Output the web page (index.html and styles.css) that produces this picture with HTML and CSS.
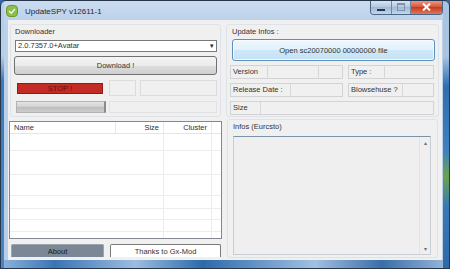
FILE: index.html
```html
<!DOCTYPE html>
<html lang="en">
<head>
    <meta charset="UTF-8">
    <title>UpdateSPY v12611-1</title>
    <link rel="stylesheet" href="styles.css">
</head>
<body>

<div class="window">
    <div class="titlebar">
        <span class="app-icon">
            <svg width="12" height="12" viewBox="0 0 12 12">
                <rect x="0.5" y="0.5" width="11" height="11" rx="3.5" fill="#8cbf4a" stroke="#6a9a34"/>
                <path d="M3 6 L5.2 8.2 L9 4" fill="none" stroke="#f4f9ec" stroke-width="1.4"/>
            </svg>
        </span>
        <span class="title">UpdateSPY v12611-1</span>
        <div class="caption-buttons">
            <span class="cap min"><i></i></span>
            <span class="cap max"><i></i></span>
            <span class="cap close">
                <svg width="9" height="8" viewBox="0 0 9 8">
                    <path d="M1 0.5 L8 7.5 M8 0.5 L1 7.5" stroke="#fff" stroke-width="2"/>
                </svg>
            </span>
        </div>
    </div>

    <div class="client">
        <div class="col-left">
            <div class="group downloader">
                <div class="group-label">Downloader</div>
                <div class="combo">
                    <span>2.0.7357.0+Avatar</span>
                    <span class="combo-arrow">&#9662;</span>
                </div>
                <div class="btn download">Download !</div>
                <div class="row stop-row">
                    <div class="stop-cell"><div class="stop">STOP !</div></div>
                    <div class="cell small"></div>
                    <div class="cell wide"></div>
                </div>
                <div class="row prog-row">
                    <div class="progress"></div>
                    <div class="cell wide"></div>
                </div>
            </div>

            <div class="list">
                <div class="list-head">
                    <span class="col-name">Name</span>
                    <span class="col-size">Size</span>
                    <span class="col-cluster">Cluster</span>
                    <span class="col-rest"></span>
                </div>
                <div class="list-row h17"></div>
                <div class="list-row h24"></div>
                <div class="list-row h21"></div>
                <div class="list-row h13"></div>
                <div class="list-row h11"></div>
                <div class="list-row h12"></div>
                <div class="list-row last"></div>
            </div>

            <div class="tabs">
                <div class="tab about">About</div>
                <div class="tab thanks">Thanks to Gx-Mod</div>
            </div>
        </div>

        <div class="col-right">
            <div class="group update">
                <div class="group-label">Update Infos :</div>
                <div class="btn open-file">Open sc20070000 00000000 file</div>
                <div class="field-row">
                    <div class="field version">
                        <span class="seg label-seg">Version</span>
                        <span class="seg mid-seg"></span>
                        <span class="seg"></span>
                    </div>
                    <div class="field type">
                        <span class="seg label-seg">Type :</span>
                        <span class="seg"></span>
                    </div>
                </div>
                <div class="field-row">
                    <div class="field release">
                        <span class="seg label-seg">Release Date :</span>
                        <span class="seg"></span>
                    </div>
                    <div class="field blow">
                        <span class="seg label-seg">Blowsehuse ?</span>
                        <span class="seg"></span>
                    </div>
                </div>
                <div class="field-row">
                    <div class="field size">
                        <span class="seg label-seg">Size</span>
                        <span class="seg"></span>
                    </div>
                </div>
            </div>

            <div class="group infos">
                <div class="group-label">Infos (Eurcsto)</div>
                <div class="textarea">
                    <div class="scroll">
                        <span class="arr up">&#9652;</span>
                        <span class="arr down">&#9662;</span>
                    </div>
                </div>
            </div>
        </div>
    </div>
</div>

</body>
</html>
```

FILE: styles.css
```css
html, body {
    margin: 0;
    padding: 0;
    background: #2f6aa8;
}

body {
    font-family: "Liberation Sans", Arial, sans-serif;
    font-size: 7.5px;
    color: #333;
}

.window {
    width: 450px;
    height: 269px;
    box-sizing: border-box;
    display: flex;
    flex-direction: column;
    border: 1px solid #27374b;
    border-radius: 6px 6px 0 0;
    background:
        linear-gradient(to bottom, #a9c4e2 0, #a9c4e2 55px, #2f6fb0 85px, #3f80c0 150px, #6aa34c 175px, #3b78b6 205px, #2f6aa8 100%) right top / 6px 100% no-repeat,
        linear-gradient(to bottom, #b8cde6 0, #b8cde6 55px, #3b79b8 80px, #4a86c2 100%) left top / 3px 100% no-repeat,
        linear-gradient(to right, #8fb4dc 0, #3a74b5 12%, #9dbde0 30%, #2d6aaa 45%, #a2c0e2 70%, #3a6ea8 85%, #9cb9dc 100%) left bottom / 100% 8px no-repeat,
        linear-gradient(to bottom, #cbdbef 0, #bcd1ea 20px, #b9cfe8 100%);
    overflow: hidden;
}

/* barre de titre */
.titlebar {
    height: 18px;
    display: flex;
    align-items: center;
    padding-left: 5px;
    position: relative;
}

.app-icon {
    display: flex;
    width: 12px;
    height: 12px;
    margin-top: 2px;
}

.title {
    margin-left: 7px;
    margin-top: 2px;
    font-size: 8px;
    color: #1b2733;
}

.caption-buttons {
    position: absolute;
    top: -1px;
    right: 6px;
    display: flex;
    height: 14px;
    border: 1px solid #4b6585;
    border-top: none;
    border-radius: 0 0 4px 4px;
    overflow: hidden;
}

.cap {
    display: flex;
    align-items: center;
    justify-content: center;
    height: 100%;
    background: linear-gradient(#dfe9f5, #b4c8e0 50%, #9fb7d4 51%, #c3d6ec);
}

.cap.min {
    width: 20px;
    border-right: 1px solid #6f88a8;
}

.cap.min i {
    width: 8px;
    height: 2px;
    margin-top: 5px;
    background: #25384f;
}

.cap.max {
    width: 18px;
    border-right: 1px solid #6f88a8;
}

.cap.max i {
    width: 6px;
    height: 5px;
    border: 1px solid #7d93ad;
    border-top-width: 2px;
}

.cap.close {
    width: 31px;
    background: linear-gradient(#eaa58f, #d9533a 50%, #c43b1d 51%, #e0755a);
}

/* zone client */
.client {
    flex: 1;
    margin: 1px 7px 8px 7px;
    padding: 4px 3px 0 1px;
    background: #f0f0f0;
    display: flex;
    gap: 4px;
}

.col-left {
    width: 213px;
    display: flex;
    flex-direction: column;
}

.col-right {
    width: 213px;
    display: flex;
    flex-direction: column;
}

.group {
    box-sizing: border-box;
    border: 1px solid #dde3e8;
    border-radius: 3px;
}

.group-label {
    height: 12px;
    line-height: 11px;
    white-space: nowrap;
}

.downloader {
    margin-left: 1px;
    width: 211px;
    height: 93px;
    padding: 1px 3px 0 4px;
}

.combo {
    margin-top: 2px;
    height: 12px;
    box-sizing: border-box;
    border: 1px solid #7a7a7a;
    background: #fff;
    display: flex;
    align-items: center;
    justify-content: space-between;
    padding: 0 2px 0 2px;
    line-height: 10px;
}

.combo-arrow {
    font-size: 7px;
    color: #222;
}

.btn {
    box-sizing: border-box;
    border: 1px solid #707070;
    border-radius: 3px;
    display: flex;
    align-items: center;
    justify-content: center;
    white-space: nowrap;
}

.download {
    margin: 4px 0 0 -1px;
    height: 19px;
    background: linear-gradient(#f4f4f4, #ebebeb 50%, #dddddd 51%, #cfcfcf);
}

.row {
    display: flex;
}

.stop-row {
    margin-top: 5px;
    height: 16px;
}

.stop-cell {
    width: 91px;
    box-sizing: border-box;
    padding: 3px 3px 2px 2px;
}

.stop {
    height: 100%;
    background: #c42b24;
    border: 1px solid #8d1c17;
    box-sizing: border-box;
    display: flex;
    align-items: center;
    justify-content: center;
    color: #6a100c;
}

.cell {
    box-sizing: border-box;
    border: 1px solid #dcdcdc;
    height: 100%;
}

.cell.small {
    width: 27px;
    margin-left: 3px;
}

.cell.wide {
    flex: 1;
    margin-left: 4px;
}

.prog-row {
    margin-top: 5px;
    height: 12px;
}

.progress {
    width: 90px;
    margin-left: 1px;
    box-sizing: border-box;
    border: 1px solid #b2b2b2;
    border-right: 2px solid #8a8a8a;
    background: linear-gradient(#e4e4e4, #d0d0d0 50%, #bdbdbd 51%, #cdcdcd);
}

.prog-row .cell.wide {
    margin-left: 3px;
    border-color: #e2e2e2;
}

/* liste des fichiers */
.list {
    margin-top: 4px;
    height: 118px;
    box-sizing: border-box;
    border: 1px solid #828790;
    background: #fff;
    overflow: hidden;
    background-image:
        linear-gradient(#ececec, #ececec),
        linear-gradient(#ececec, #ececec);
    background-size: 1px 100%, 1px 100%;
    background-position: 153px 0, 201px 0;
    background-repeat: no-repeat;
}

.list-head {
    display: flex;
    height: 11px;
    line-height: 11px;
    background: #fff;
    border-bottom: 1px solid #e5e5e5;
}

.list-head span {
    box-sizing: border-box;
    border-right: 1px solid #e3e8ee;
    padding: 0 4px;
}

.col-name {
    width: 106px;
}

.col-size {
    width: 48px;
    text-align: right;
}

.col-cluster {
    width: 48px;
    text-align: right;
}

.col-rest {
    flex: 1;
    border-right: none !important;
}

.list-row {
    border-bottom: 1px solid #ededed;
    box-sizing: border-box;
}

.h17 { height: 17px; }
.h24 { height: 24px; }
.h21 { height: 21px; }
.h13 { height: 13px; }
.h11 { height: 11px; }
.h12 { height: 12px; }
.list-row.last { border-bottom: none; height: 9px; }

/* onglets du bas */
.tabs {
    margin-top: 5px;
    display: flex;
    height: 13px;
}

.tab {
    box-sizing: border-box;
    border: 1px solid #8a8a8a;
    border-bottom: none;
    border-radius: 2px 2px 0 0;
    display: flex;
    align-items: center;
    justify-content: center;
}

.about {
    width: 93px;
    margin-left: 2px;
    background: #7b8794;
    border-color: #9aa4ae;
    color: #1a1a1a;
}

.thanks {
    width: 111px;
    margin-left: 6px;
    background: #fff;
    border-color: #7a7a7a;
}

/* colonne droite */
.update {
    height: 93px;
    padding: 1px 3px 0 5px;
}

.open-file {
    margin-top: 1px;
    height: 22px;
    border-color: #5f8fbb;
    background: linear-gradient(#eef7fd, #e1f1fb 50%, #cde8f8 51%, #c4e2f5);
    box-shadow: inset 0 0 0 1px #f6fbff;
}

.field-row {
    display: flex;
    gap: 5px;
    margin-top: 4px;
    margin-left: -2px;
}

.field {
    display: flex;
    height: 14px;
    box-sizing: border-box;
    border: 1px solid #d3d3d3;
}

.seg {
    box-sizing: border-box;
    height: 100%;
    line-height: 12px;
    padding-left: 2px;
    white-space: nowrap;
    border-right: 1px solid #d8d8d8;
}

.seg:last-child {
    border-right: none;
    flex: 1;
}

.version { width: 113px; }
.version .label-seg { width: 37px; }
.version .mid-seg { width: 51px; }
.type { width: 86px; }
.type .label-seg { width: 36px; }
.release { width: 113px; }
.release .label-seg { width: 60px; }
.blow { width: 86px; }
.blow .label-seg { width: 54px; }
.size { width: 204px; }
.size .label-seg { width: 30px; }

.infos {
    margin-top: 2px;
    margin-left: 1px;
    width: 211px;
    height: 139px;
    padding: 1px 6px 0 5px;
}

.textarea {
    margin-top: 3px;
    height: 119px;
    box-sizing: border-box;
    border: 1px solid #c9ced4;
    border-top-color: #7d93a6;
    background: #efefef;
    display: flex;
    justify-content: flex-end;
}

.scroll {
    width: 10px;
    border-left: 1px solid #e2e2e2;
    display: flex;
    flex-direction: column;
    justify-content: space-between;
    align-items: center;
    color: #707070;
    font-size: 6px;
    padding: 2px 0;
}
```
